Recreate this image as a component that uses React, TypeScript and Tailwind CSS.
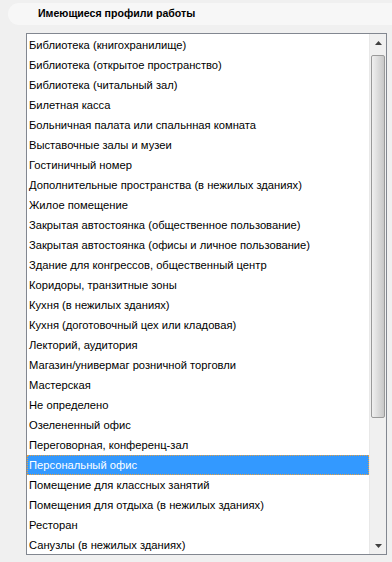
import React from 'react';

const profiles = [
  'Библиотека (книгохранилище)',
  'Библиотека (открытое пространство)',
  'Библиотека (читальный зал)',
  'Билетная касса',
  'Больничная палата или спальнная комната',
  'Выставочные залы и музеи',
  'Гостиничный номер',
  'Дополнительные пространства (в нежилых зданиях)',
  'Жилое помещение',
  'Закрытая автостоянка (общественное пользование)',
  'Закрытая автостоянка (офисы и личное пользование)',
  'Здание для конгрессов, общественный центр',
  'Коридоры, транзитные зоны',
  'Кухня (в нежилых зданиях)',
  'Кухня (доготовочный цех или кладовая)',
  'Лекторий, аудитория',
  'Магазин/универмаг розничной торговли',
  'Мастерская',
  'Не определено',
  'Озелененный офис',
  'Переговорная, конференц-зал',
  'Персональный офис',
  'Помещение для классных занятий',
  'Помещения для отдыха (в нежилых зданиях)',
  'Ресторан',
  'Санузлы (в нежилых зданиях)',
];

const selected = 'Персональный офис';

function App() {
  return (
    <div className="w-[392px] h-[562px] bg-[#f0f0f0] overflow-hidden" style={{ fontFamily: '"Liberation Sans", Arial, sans-serif' }}>
      <div className="ml-2 mt-[3px] h-[22px] rounded-l-[11px] bg-[#f7f7f7] flex items-center pl-[30px]">
        <span className="text-[10.6px] font-bold text-black">Имеющиеся профили работы</span>
      </div>
      <div className="ml-[26px] mt-2 w-[361px] h-[522px] border border-[#828790] bg-white flex">
        <div className="flex-1 pt-[1px] overflow-hidden">
          {profiles.map((p) => (
            <div
              key={p}
              className={
                p === selected
                  ? 'h-5 flex items-center pl-[1px] text-[11.2px] text-white bg-[#3399ff] border border-dotted border-[#e8a040] whitespace-nowrap'
                  : 'h-5 flex items-center pl-[2px] text-[11.2px] text-black whitespace-nowrap'
              }
            >
              {p}
            </div>
          ))}
        </div>
        <div className="w-[17px] flex flex-col bg-[#f0f0f0] border-l border-[#e8e8e8]">
          <div className="h-[17px] flex items-center justify-center">
            <svg width="7" height="4" viewBox="0 0 7 4"><path d="M3.5 0 L7 4 L0 4 Z" fill="#404040" /></svg>
          </div>
          <div className="mx-[1px] mt-[4px] h-[363px] rounded-[2px] border border-[#9a9a9a] bg-gradient-to-r from-[#f0f0f0] via-[#dcdcdc] to-[#c8c8c8]" />
          <div className="flex-1" />
          <div className="h-[17px] flex items-center justify-center">
            <svg width="7" height="4" viewBox="0 0 7 4"><path d="M0 0 L7 0 L3.5 4 Z" fill="#404040" /></svg>
          </div>
        </div>
      </div>
    </div>
  );
}

export default App;
